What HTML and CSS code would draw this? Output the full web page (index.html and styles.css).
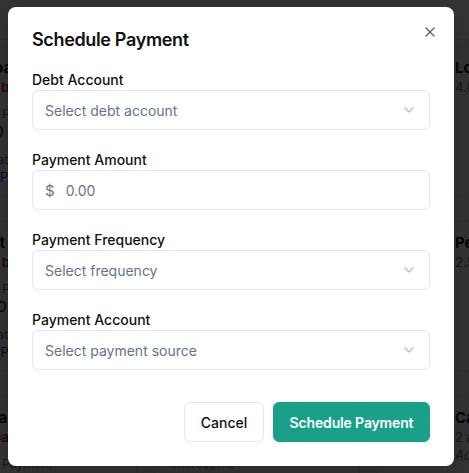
FILE: index.html
```html
<!DOCTYPE html>
<html lang="en">
<head>
<meta charset="utf-8">
<title>Schedule Payment</title>
<link rel="stylesheet" href="styles.css">
</head>
<body>
<div class="page" aria-hidden="true">
  <div class="topbar"></div>
  <div class="board-wrap">
    <div class="board">
      <div class="card">
        <div class="c-title">Auto Loan</div>
        <div class="c-red">$12,528 balance</div>
        <div class="c-label">Minimum Payment</div>
        <div class="c-value">$415.00</div>
        <div class="c-label">Interest rate</div>
        <div class="c-blue">5.23% APR</div>
      </div>
      <div class="card">
        <div class="c-title">Credit Card</div>
        <div class="c-red">$3,280 balance</div>
        <div class="c-label">Minimum Payment</div>
        <div class="c-value">$95.00</div>
        <div class="c-label">Interest/mo</div>
        <div class="c-blue">$54.10</div>
      </div>
      <div class="card card-icon">
        <div class="ic"></div>
        <div class="c-col">
          <div class="c-title">Loan Summary</div>
          <div class="c-grey">4.8% APR</div>
        </div>
      </div>

      <div class="card">
        <div class="c-title">Student Loan</div>
        <div class="c-red">$18,940 balance</div>
        <div class="c-label">Minimum Payment</div>
        <div class="c-value">$236.00</div>
        <div class="c-label">Interest rate</div>
        <div class="c-blue">4.45% APR</div>
      </div>
      <div class="card">
        <div class="c-title">Medical Bill</div>
        <div class="c-red">$1,120 balance</div>
        <div class="c-label">Minimum Payment</div>
        <div class="c-value">$50.00</div>
        <div class="c-label">Interest/mo</div>
        <div class="c-blue">$0.00</div>
      </div>
      <div class="card card-icon">
        <div class="ic"></div>
        <div class="c-col">
          <div class="c-title">Personal Loan</div>
          <div class="c-grey">2.5% APR</div>
        </div>
      </div>

      <div class="card">
        <div class="c-title">Personal Card</div>
        <div class="c-red">$3,410 balance</div>
        <div class="c-label">Minimum Payment</div>
        <div class="c-value">$120.00</div>
      </div>
      <div class="card">
        <div class="c-title">Store Card</div>
        <div class="c-red">$640 balance</div>
        <div class="c-label">Interest/mo</div>
        <div class="c-value">$12.00</div>
      </div>
      <div class="card card-icon">
        <div class="ic"></div>
        <div class="c-col">
          <div class="c-title">Card Total</div>
          <div class="c-grey">2 accounts</div>
          <div class="c-grey c-it">Active</div>
        </div>
      </div>
    </div>
  </div>
</div>

<div class="overlay"></div>

<div class="modal" role="dialog" aria-labelledby="modal-title">
  <button class="close" aria-label="Close">
    <svg width="16" height="16" viewBox="0 0 24 24" fill="none" stroke="currentColor" stroke-width="2" stroke-linecap="round" stroke-linejoin="round"><path d="M18 6 6 18"/><path d="m6 6 12 12"/></svg>
  </button>
  <h2 class="title" id="modal-title">Schedule Payment</h2>

  <div class="form">
    <div class="field">
      <label class="label">Debt Account</label>
      <div class="control select">
        <span class="placeholder">Select debt account</span>
        <svg class="chev" width="16" height="16" viewBox="0 0 24 24" fill="none" stroke="currentColor" stroke-width="2" stroke-linecap="round" stroke-linejoin="round"><path d="m6 9 6 6 6-6"/></svg>
      </div>
    </div>
    <div class="field">
      <label class="label">Payment Amount</label>
      <div class="control amount">
        <span class="cur">$</span>
        <span class="placeholder">0.00</span>
      </div>
    </div>
    <div class="field">
      <label class="label">Payment Frequency</label>
      <div class="control select">
        <span class="placeholder">Select frequency</span>
        <svg class="chev" width="16" height="16" viewBox="0 0 24 24" fill="none" stroke="currentColor" stroke-width="2" stroke-linecap="round" stroke-linejoin="round"><path d="m6 9 6 6 6-6"/></svg>
      </div>
    </div>
    <div class="field">
      <label class="label">Payment Account</label>
      <div class="control select">
        <span class="placeholder">Select payment source</span>
        <svg class="chev" width="16" height="16" viewBox="0 0 24 24" fill="none" stroke="currentColor" stroke-width="2" stroke-linecap="round" stroke-linejoin="round"><path d="m6 9 6 6 6-6"/></svg>
      </div>
    </div>
  </div>

  <div class="footer">
    <button class="btn btn-cancel">Cancel</button>
    <button class="btn btn-primary">Schedule Payment</button>
  </div>
</div>
</body>
</html>
```

FILE: styles.css
```css
* { box-sizing: border-box; }

html, body {
  margin: 0;
  height: 473px;
  overflow: hidden;
}

body {
  font-family: Inter, "Noto Sans", "Liberation Sans", sans-serif;
  background: #f8fafc;
  color: #111827;
  position: relative;
}

/* ---------- backdrop page ---------- */
.page {
  width: 100%;
  height: 473px;
  overflow: hidden;
}

.topbar {
  height: 40px;
  background: #ffffff;
  border-bottom: 1px solid #e5e7eb;
}

.board-wrap {
  display: flex;
  justify-content: center;
  margin-top: 6px;
}

.board {
  flex: none;
  width: 697px;
  padding-left: 45px;
  display: grid;
  grid-template-columns: 206px 206px 206px;
  column-gap: 17px;
  row-gap: 25px;
}

.card {
  height: 150px;
  background: #ffffff;
  border: 1px solid #e5e7eb;
  border-radius: 8px;
  padding: 11px 15px;
}

.card-icon {
  display: flex;
  gap: 14px;
}

.ic {
  width: 48px;
  height: 48px;
  border-radius: 8px;
  background: #eef2f7;
  flex: none;
}

.c-title {
  font-size: 15px;
  line-height: 20px;
  font-weight: 700;
  color: #111827;
  white-space: nowrap;
}

.c-red {
  font-size: 13px;
  line-height: 18px;
  color: #b91c1c;
  font-weight: 600;
}

.c-label {
  margin-top: 10px;
  font-size: 12px;
  line-height: 16px;
  color: #6b7280;
}

.c-value {
  font-size: 15px;
  line-height: 20px;
  color: #111827;
}

.c-blue {
  font-size: 13px;
  line-height: 18px;
  color: #1d4ed8;
}

.c-grey {
  font-size: 13px;
  line-height: 18px;
  color: #6b7280;
}

.c-it { font-style: italic; }

.overlay {
  position: absolute;
  inset: 0;
  background: rgba(0, 0, 0, 0.8);
}

/* ---------- modal ---------- */
.modal {
  position: absolute;
  left: 8px;
  top: 7px;
  width: 446px;
  background: #ffffff;
  border-radius: 8px;
  padding: 24px;
  box-shadow: 0 10px 25px rgba(0, 0, 0, 0.15);
}

.close {
  position: absolute;
  top: 17px;
  right: 16px;
  width: 16px;
  height: 16px;
  padding: 0;
  border: 0;
  background: none;
  color: #3f3f46;
  opacity: 0.8;
  display: flex;
}

.title {
  margin: 0;
  font-size: 18px;
  line-height: 18px;
  font-weight: 600;
  color: #111111;
  letter-spacing: -0.35px;
}

.form {
  margin-top: 21px;
  display: flex;
  flex-direction: column;
  gap: 20px;
}

.field {
  display: flex;
  flex-direction: column;
}

.label {
  font-size: 14px;
  line-height: 20px;
  font-weight: 500;
  color: #111111;
}

.control {
  height: 40px;
  border: 1px solid #e2e8f0;
  border-radius: 6px;
  padding: 0 12px;
  display: flex;
  align-items: center;
  font-size: 14px;
  background: #ffffff;
}

.select {
  justify-content: space-between;
}

.placeholder {
  color: #64748b;
}

.chev {
  color: #94a3b8;
  opacity: 0.7;
}

.amount {
  gap: 11px;
}

.cur {
  color: #64748b;
  font-size: 15px;
}

.footer {
  margin-top: 32px;
  display: flex;
  justify-content: flex-end;
  gap: 9px;
}

.btn {
  height: 40px;
  padding: 0 16px;
  border-radius: 6px;
  font-family: inherit;
  font-size: 14px;
  cursor: pointer;
}

.btn-cancel {
  width: 80px;
  padding: 0;
  background: #ffffff;
  border: 1px solid #e2e8f0;
  color: #111111;
  font-weight: 500;
}

.btn-primary {
  width: 157px;
  padding: 0;
  background: #1aa088;
  border: 1px solid #1aa088;
  color: #ffffff;
  font-weight: 600;
  letter-spacing: -0.15px;
}
```
